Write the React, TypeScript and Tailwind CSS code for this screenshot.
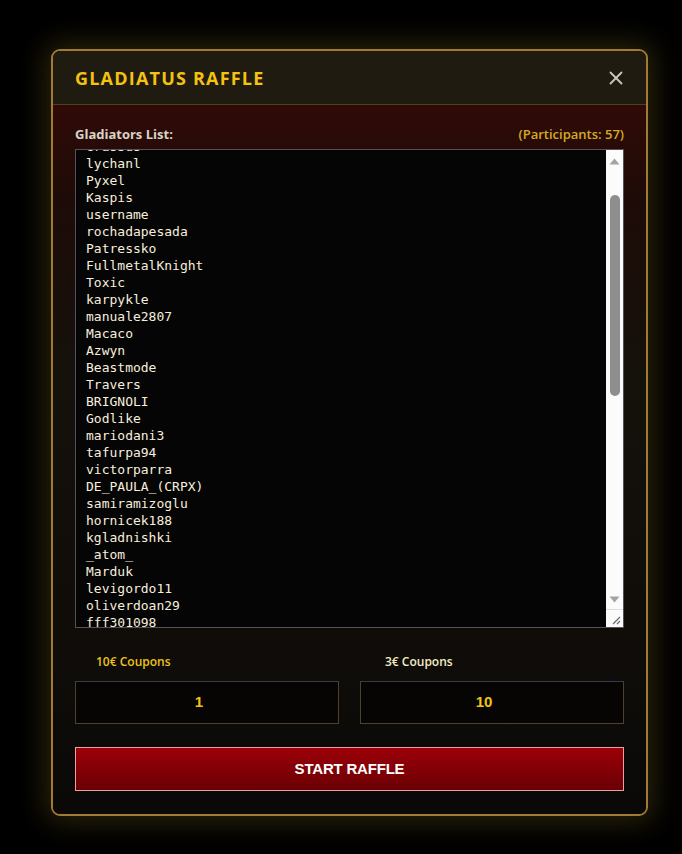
import { X } from "lucide-react";

const gladiators = [
  "Grassus",
  "lychanl",
  "Pyxel",
  "Kaspis",
  "username",
  "rochadapesada",
  "Patressko",
  "FullmetalKnight",
  "Toxic",
  "karpykle",
  "manuale2807",
  "Macaco",
  "Azwyn",
  "Beastmode",
  "Travers",
  "BRIGNOLI",
  "Godlike",
  "mariodani3",
  "tafurpa94",
  "victorparra",
  "DE_PAULA_(CRPX)",
  "samiramizoglu",
  "hornicek188",
  "kgladnishki",
  "_atom_",
  "Marduk",
  "levigordo11",
  "oliverdoan29",
  "fff301098",
  "Spartacus",
];

function Scrollbar() {
  return (
    <div className="w-[17px] flex flex-col bg-[#fbfbfb]">
      <div className="h-[16px] flex items-end justify-center pb-[1px]">
        <svg width="11" height="7" viewBox="0 0 11 7">
          <path d="M5.5 0.5 L10.5 6.5 L0.5 6.5 Z" fill="#a3a3a3" />
        </svg>
      </div>
      <div className="flex-1 flex justify-center">
        <div className="mt-[29px] h-[201px] w-[10px] rounded-full bg-[#8e8e8e]" />
      </div>
      <div className="h-[16px] flex items-start justify-center pt-[3px]">
        <svg width="11" height="7" viewBox="0 0 11 7">
          <path d="M0.5 0.5 L10.5 0.5 L5.5 6.5 Z" fill="#a3a3a3" />
        </svg>
      </div>
      <div className="h-[18px] border-t border-[#dcdcdc] flex items-end justify-end pr-[2px] pb-[2px]">
        <svg width="9" height="9" viewBox="0 0 9 9">
          <path d="M8 1 L1 8 M8 5 L5 8" stroke="#6b6b6b" strokeWidth="1.2" />
        </svg>
      </div>
    </div>
  );
}

function CouponField({ label, value, labelClass }: { label: string; value: string; labelClass: string }) {
  return (
    <div className="flex flex-col">
      <span className={`text-[12px] font-semibold leading-[16px] ${labelClass}`}>{label}</span>
      <div className="mt-[11px] h-[43px] pr-[16px] border border-[#4e4228] border-t-[#3c3a4a] bg-[#060504] flex items-center justify-center">
        <span className="text-[15px] font-bold text-[#f2c414] font-['Liberation_Sans',sans-serif]">{value}</span>
      </div>
    </div>
  );
}

export default function App() {
  return (
    <main className="min-h-screen bg-black pt-[49px] pl-[51px] font-['Open_Sans',sans-serif]">
      <div className="w-[597px] h-[767px] rounded-[9px] border-2 border-[#a17b34] bg-[#0b0a08] shadow-[0_0_28px_6px_rgba(120,100,30,0.35)] overflow-hidden flex flex-col">
        <header className="h-[54px] shrink-0 px-[22px] flex items-center justify-between bg-[#1f1b11] border-b border-[#4f4220]">
          <h1 className="text-[18px] font-bold tracking-[1.2px] text-[#f4c20f] leading-none">
            GLADIATUS RAFFLE
          </h1>
          <button className="text-[#c9c7c0] -mr-[3px]">
            <X size={22} strokeWidth={2} />
          </button>
        </header>

        <section className="flex-1 px-[22px] pt-[20px] pb-[22px] bg-[linear-gradient(to_bottom,#300a07_0px,#1e0b07_90px,#15110b_260px,#100d09_520px,#0a0908_100%)]">
          <div className="flex items-center justify-between mb-[6px] leading-[18px]">
            <span className="text-[13px] font-bold text-[#d9d4c8]">Gladiators List:</span>
            <span className="text-[13px] font-semibold text-[#d6ab22]">(Participants: 57)</span>
          </div>

          <div className="h-[479px] border border-[#55505c] bg-[#060505] flex">
            <div className="flex-1 overflow-hidden pl-[10px]">
              <ul className="-mt-[12px] font-['DejaVu_Sans_Mono',monospace] text-[13px] leading-[17px] text-[#f6efde]">
                {gladiators.map((name) => (
                  <li key={name}>{name}</li>
                ))}
              </ul>
            </div>
            <Scrollbar />
          </div>

          <div className="mt-[26px] grid grid-cols-2 gap-[21px]">
            <CouponField label="10€ Coupons" value="1" labelClass="pl-[21px] text-[#eec21a]" />
            <CouponField label="3€ Coupons" value="10" labelClass="pl-[25px] text-[#f3ebc4]" />
          </div>

          <button className="mt-[23px] w-full h-[44px] border border-[#e8a0a6] bg-[linear-gradient(to_bottom,#9c0008,#6a0004)] text-white text-[15px] font-bold font-['Liberation_Sans',sans-serif] tracking-[-0.2px]">
            START RAFFLE
          </button>
        </section>
      </div>
    </main>
  );
}
